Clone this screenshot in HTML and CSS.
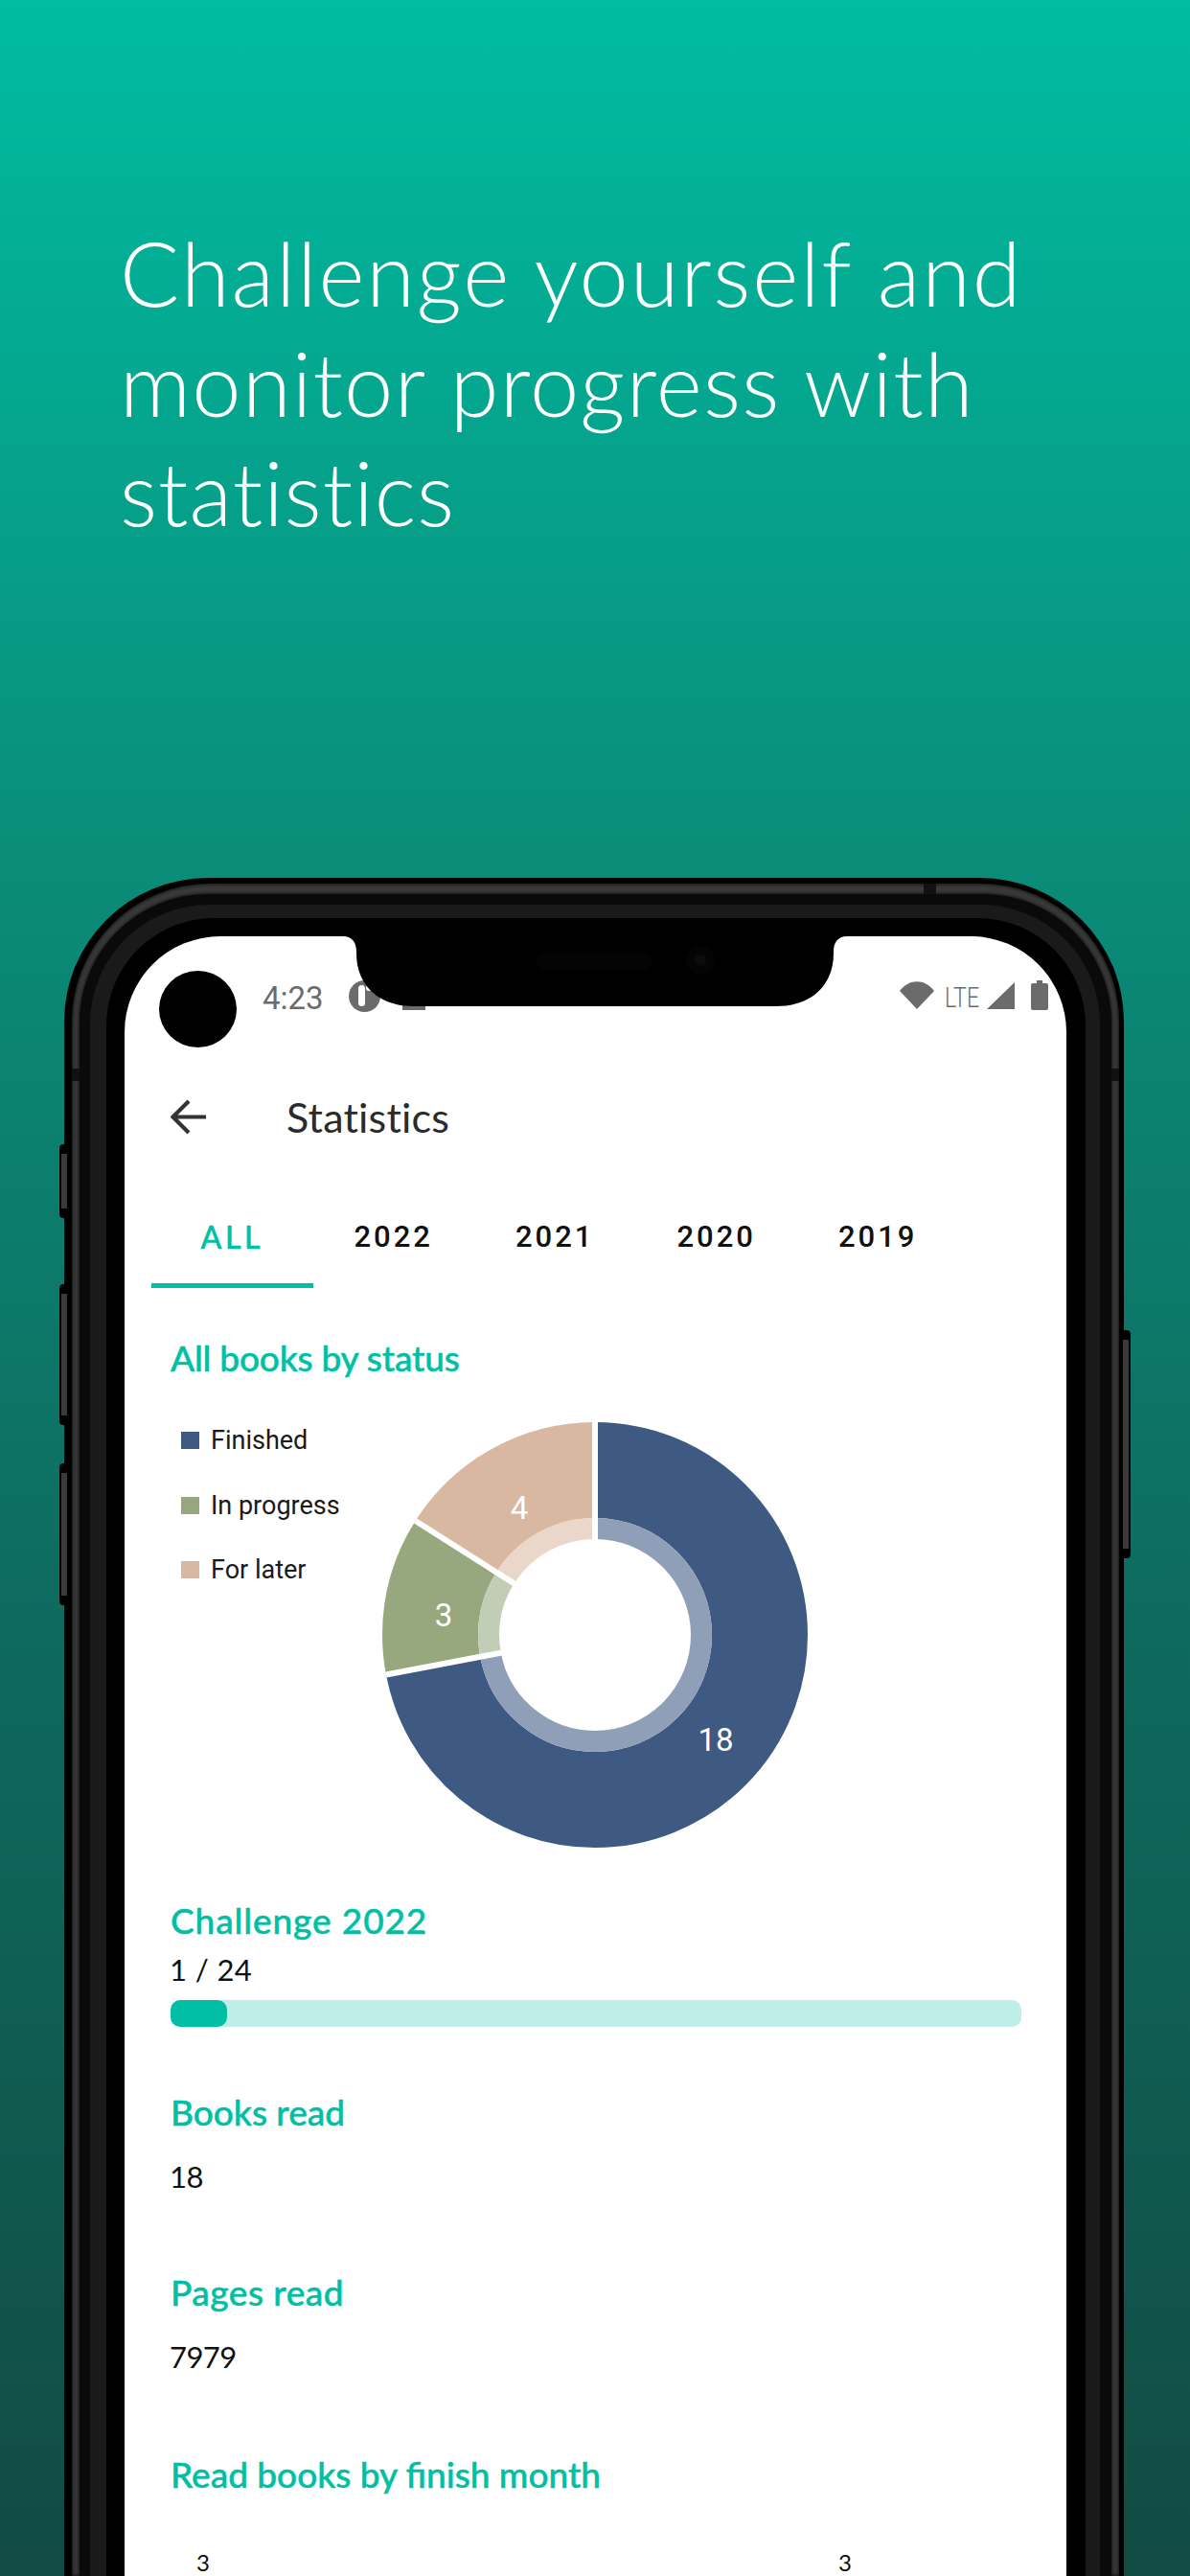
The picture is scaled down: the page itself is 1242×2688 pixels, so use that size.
FILE: index.html
```html
<!DOCTYPE html>
<html>
<head>
  <meta charset="utf-8">
  <title>Statistics</title>
  <link rel="stylesheet" href="styles.css">
</head>

<body>
  <div class="hero">
    <h1>Challenge yourself and<br><span class="line-2">monitor progress with</span><br><span class="line-3">statistics</span></h1>
  </div>

  <div class="phone">
    <!-- side buttons -->
    <div class="side-btn btn-l1"></div>
    <div class="side-btn btn-l2"></div>
    <div class="side-btn btn-l3"></div>
    <div class="side-btn btn-r1"></div>

    <!-- antenna cuts -->
    <div class="cut cut-top"></div>
    <div class="cut cut-left"></div>
    <div class="cut cut-right"></div>

    <div class="rim">
      <div class="shell">
        <div class="edge">
          <div class="bezel">
            <div class="screen">

              <div class="status">
                <div class="hole"></div>
                <div class="time">4:23</div>
                <svg class="st-circle" width="33" height="33" viewBox="0 0 33 33">
                  <circle cx="16.5" cy="16.5" r="16.5" fill="#6b6b6b"/>
                  <rect x="10" y="5" width="7" height="22" rx="3.5" fill="#fff"/>
                  <circle cx="21" cy="8" r="3" fill="#fff"/>
                </svg>
                <div class="st-square"></div>
                <div class="st-right">
                  <svg class="st-wifi" width="36" height="29" viewBox="0 0 36 29">
                    <path d="M0 10 C10 -3 26 -3 36 10 L18 29 Z" fill="#6b6b6b"/>
                  </svg>
                  <div class="st-lte">LTE</div>
                  <svg class="st-signal" width="29" height="28" viewBox="0 0 29 28">
                    <path d="M0 28 L29 0 V28 Z" fill="#6b6b6b"/>
                  </svg>
                  <svg class="st-batt" width="18" height="31" viewBox="0 0 18 31">
                    <path d="M6 0 H12 V3 H16 Q18 3 18 5 V29 Q18 31 16 31 H2 Q0 31 0 29 V5 Q0 3 2 3 H6 Z" fill="#6b6b6b"/>
                  </svg>
                </div>
              </div>

              <!-- notch -->
              <svg class="notch" width="526" height="73" viewBox="0 0 526 73">
                <path d="M0 0 C9 0 14 6 14 16 V18 C14 50 36 73 74 73 H452 C490 73 512 50 512 18 V16 C512 6 517 0 526 0 Z" fill="#000"/>
                <rect x="202" y="16" width="120" height="19" rx="9" fill="#040404"/>
                <circle cx="373" cy="25" r="15" fill="#040404"/>
                <circle cx="373" cy="25" r="6" fill="#0c0c0c"/>
              </svg>

              <div class="toolbar">
                <svg class="back" width="37" height="37" viewBox="0 0 37 37">
                  <path d="M37 18.5 H3 M19 2 L2.5 18.5 L19 35" fill="none" stroke="#333" stroke-width="4.2"/>
                </svg>
                <div class="title">Statistics</div>
              </div>

              <div class="tabs">
                <div class="tab active">ALL</div>
                <div class="tab">2022</div>
                <div class="tab">2021</div>
                <div class="tab">2020</div>
                <div class="tab">2019</div>
              </div>

              <div class="content">
                <h2 class="head-status">All books by status</h2>
                <div class="chart-row">
                  <div class="legend">
                    <div class="legend-item"><span class="swatch sw-blue"></span>Finished</div>
                    <div class="legend-item"><span class="swatch sw-green"></span>In progress</div>
                    <div class="legend-item"><span class="swatch sw-tan"></span>For later</div>
                  </div>
                  <svg class="donut" width="444" height="444" viewBox="0 0 444 444">
                    <g fill="none" transform="rotate(-90 222 222)">
                      <circle cx="222" cy="222" r="172" stroke="#3f5a82" stroke-width="100" pathLength="25" stroke-dasharray="18 7"/>
                      <circle cx="222" cy="222" r="172" stroke="#98a87e" stroke-width="100" pathLength="25" stroke-dasharray="3 22" stroke-dashoffset="-18"/>
                      <circle cx="222" cy="222" r="172" stroke="#d8b8a1" stroke-width="100" pathLength="25" stroke-dasharray="4 21" stroke-dashoffset="-21"/>
                      <circle cx="222" cy="222" r="111" stroke="#8f9fb8" stroke-width="22" pathLength="25" stroke-dasharray="18 7"/>
                      <circle cx="222" cy="222" r="111" stroke="#c2cdb6" stroke-width="22" pathLength="25" stroke-dasharray="3 22" stroke-dashoffset="-18"/>
                      <circle cx="222" cy="222" r="111" stroke="#ead7ca" stroke-width="22" pathLength="25" stroke-dasharray="4 21" stroke-dashoffset="-21"/>
                    </g>
                    <g stroke="#fff" stroke-width="6">
                      <path d="M222 122 V0"/>
                      <path d="M123.8 240.7 L3.9 263.5"/>
                      <path d="M137.6 168.4 L34.6 103"/>
                    </g>
                    <text class="donut-label" x="143" y="101">4</text>
                    <text class="donut-label" x="64" y="213">3</text>
                    <text class="donut-label" x="348" y="343">18</text>
                  </svg>
                </div>

                <h2 class="head-challenge">Challenge 2022</h2>
                <div class="value value-challenge">1 / 24</div>
                <div class="progress"><div class="progress-fill"></div></div>

                <h2 class="head-books">Books read</h2>
                <div class="value value-stat">18</div>

                <h2 class="head-pages">Pages read</h2>
                <div class="value value-stat">7979</div>

                <h2 class="head-month">Read books by finish month</h2>
                <div class="bar-labels">
                  <span>3</span>
                  <span>3</span>
                </div>
              </div>

            </div>
          </div>
        </div>
      </div>
    </div>
  </div>
</body>
</html>
```

FILE: styles.css
```css
html, body {
  height: 2688px;
  overflow: hidden;
}

body {
  margin: 0;
  background: linear-gradient(180deg, #00bca1 0%, #0a8c78 34%, #0e6a5e 63%, #124b43 100%);
  font-family: "Lato", sans-serif;
}

.hero {
  box-sizing: border-box;
  height: 916px;
  padding: 228px 0 0 125px;
}

h1 {
  margin: 0;
  font-weight: 300;
  font-size: 92px;
  line-height: 114.5px;
  letter-spacing: 1.9px;
  color: #fff;
}

.line-2 { letter-spacing: 1.25px; }
.line-3 { letter-spacing: 1px; }

/* phone frame, outside in */
.phone {
  position: relative;
  box-sizing: border-box;
  width: 1106px;
  height: 1772px;
  margin-left: 67px;
  padding: 6px 5px 0 8px;
  background: #000;
  border-radius: 150px 150px 0 0;
}

.rim {
  padding: 11px 8px 0 8px;
  background: #3a3a3a;
  border-radius: 144px 144px 0 0;
  box-shadow: inset 0 0 4px #000;
}

.shell {
  padding: 11px 12px 0 11px;
  background: #0a0a0a;
  border-radius: 134px 134px 0 0;
  box-shadow: 0 0 4px #000;
}

.edge {
  padding: 14px 15px 0 17px;
  background: #1a1a1a;
  border-radius: 124px 124px 0 0;
}

.bezel {
  padding: 19px 20px 0 19px;
  background: #000;
  border-radius: 112px 112px 0 0;
}

.screen {
  position: relative;
  height: 1711px;
  overflow: hidden;
  background: #fff;
  border-radius: 100px 100px 0 0;
}

.side-btn {
  position: absolute;
  width: 6px;
  background: #3a3a3a;
  border: 0 solid #000;
  border-width: 10px 2px;
  border-radius: 4px;
}

.btn-l1 { left: -5px; top: 278px; height: 57px; }
.btn-l2 { left: -5px; top: 424px; height: 127px; }
.btn-l3 { left: -5px; top: 611px; height: 128px; }
.btn-r1 { right: -7px; top: 472px; height: 218px; }

.cut {
  position: absolute;
  background: #111;
  z-index: 1;
}

.cut-top { left: 897px; top: 6px; width: 13px; height: 11px; }
.cut-left { left: 8px; top: 199px; width: 8px; height: 13px; }
.cut-right { right: 5px; top: 199px; width: 8px; height: 13px; }

/* status bar */
.status {
  box-sizing: border-box;
  height: 133px;
  padding: 36px 19px 0 36px;
  display: flex;
  align-items: flex-start;
}

.hole {
  width: 81px;
  height: 80px;
  background: #000;
  border-radius: 50%;
}

.time {
  margin: 12px 0 0 27px;
  font-family: "Roboto", sans-serif;
  font-size: 33px;
  line-height: 33px;
  color: #6b6b6b;
}

.st-circle {
  margin: 10px 0 0 26px;
}

.st-square {
  width: 24px;
  height: 24px;
  margin: 17px 0 0 23px;
  background: #6b6b6b;
}

.st-right {
  margin-left: auto;
  display: flex;
  align-items: flex-start;
}

.st-wifi { margin-top: 11px; }

.st-lte {
  width: 38px;
  margin: 13px 6px 0 11px;
  font-family: "Roboto", sans-serif;
  font-weight: 300;
  font-size: 29px;
  line-height: 30px;
  color: #6b6b6b;
  transform: scaleX(0.8);
  transform-origin: left;
}

.st-signal { margin-top: 12px; }
.st-batt { margin: 10px 0 0 17px; }

.notch {
  position: absolute;
  left: 228px;
  top: 0;
}

/* app bar */
.toolbar {
  height: 110px;
  padding-bottom: 2px;
  padding-left: 48px;
  display: flex;
  align-items: center;
}

.back {
  margin-right: 84px;
}

.title {
  font-size: 43px;
  letter-spacing: 0.2px;
  color: #2b2b2b;
}

/* tabs */
.tabs {
  margin-top: 50px;
  padding-left: 29px;
  display: flex;
}

.tab {
  width: 168.5px;
  padding: 1px 0 30px;
  border-bottom: 5px solid transparent;
  text-align: center;
  font-family: "Roboto", sans-serif;
  font-weight: 500;
  font-size: 31px;
  line-height: 36px;
  letter-spacing: 3px;
  color: #111;
}

.tab.active {
  margin-left: -1px;
  font-family: "Lato", sans-serif;
  font-size: 32px;
  letter-spacing: 3.5px;
  -webkit-text-stroke: 0.5px #00bfa5;
  color: #00bfa5;
  border-bottom-color: #00bfa5;
}

/* content */
.content {
  padding: 0 47px 0 48px;
}

h2 {
  margin: 0;
  font-weight: 500;
  font-size: 37px;
  line-height: 40px;
  -webkit-text-stroke: 0.5px #00bfa5;
  color: #00bfa5;
}

.head-status { margin-top: 53px; letter-spacing: -0.2px; }
.head-challenge { margin-top: 56px; letter-spacing: 0.9px; }
.head-books { margin-top: 69px; }
.head-pages { margin-top: 83px; letter-spacing: 0.5px; }
.head-month { margin-top: 85px; }

.chart-row {
  margin-top: 47px;
  display: flex;
  align-items: flex-start;
}

.legend {
  box-sizing: border-box;
  width: 221px;
  padding: 1px 0 0 11px;
  display: flex;
  flex-direction: column;
  gap: 31.5px;
}

.legend-item {
  height: 36px;
  display: flex;
  align-items: center;
  font-family: "Roboto", sans-serif;
  font-size: 27px;
  white-space: nowrap;
  color: #1a1a1a;
}

.swatch {
  width: 19px;
  height: 18px;
  margin-right: 12px;
}

.sw-blue { background: #3f5a82; }
.sw-green { background: #98a87e; }
.sw-tan { background: #d8b8a1; }

.donut-label {
  font-family: "Roboto", sans-serif;
  font-size: 33px;
  text-anchor: middle;
  fill: #fff;
}

.value {
  font-size: 31px;
  line-height: 36px;
  color: #111;
}

.value-challenge { margin-top: 13px; letter-spacing: 0.4px; margin-left: -1px; }
.value-stat { margin-top: 29px; letter-spacing: -0.6px; margin-left: -1px; }

.progress {
  height: 28px;
  margin-top: 14px;
  background: #beeee7;
  border-radius: 10px;
}

.progress-fill {
  width: 59px;
  height: 100%;
  background: #00bfa5;
  border-radius: 10px;
}

.bar-labels {
  width: 684px;
  margin-top: 58px;
  padding-left: 27px;
  display: flex;
  justify-content: space-between;
  font-size: 24px;
  line-height: 28px;
  color: #111;
}
```
